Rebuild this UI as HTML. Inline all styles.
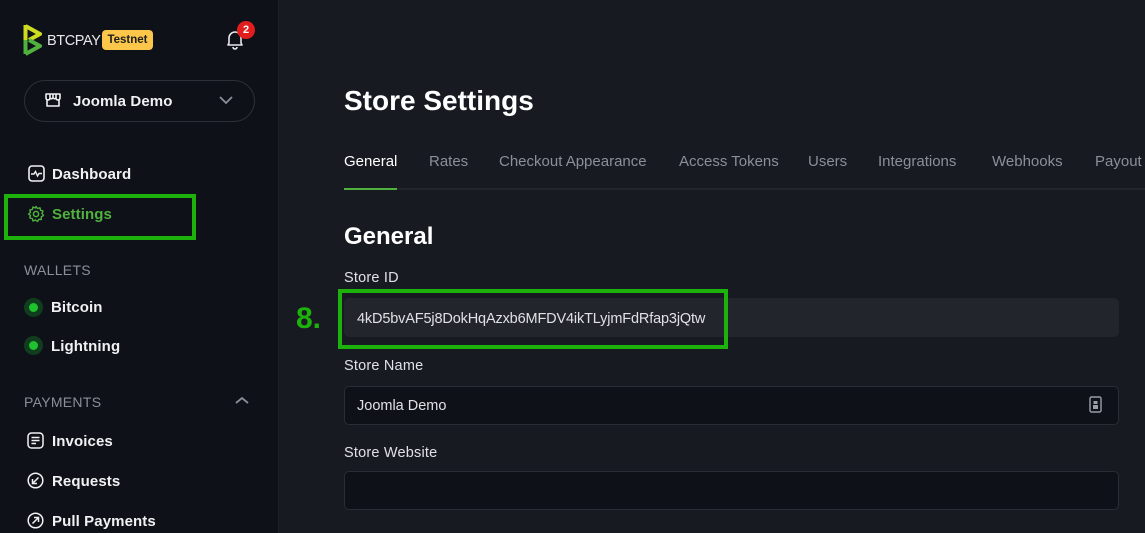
<!DOCTYPE html>
<html><head><meta charset="utf-8"><style>
*{margin:0;padding:0;box-sizing:border-box}
html{overflow:hidden;background:#171a21}
body{width:1145px;height:533px;overflow:hidden;background:#171a21;font-family:"Liberation Sans",sans-serif;position:relative;color:#fff}
.a{position:absolute;white-space:nowrap}
#side{position:absolute;left:0;top:0;width:279px;height:533px;background:#0f1118;border-right:1px solid #1c1f26}
.nav{font-size:15px;color:#f0f1f3;font-weight:bold;letter-spacing:.1px}
.sec{font-size:14px;color:#8a8f99;letter-spacing:.3px}
.tab{font-size:15px;color:#8a8f99;top:153px}
.lbl{font-size:14.5px;color:#dfe1e5;letter-spacing:.2px}
.inp{position:absolute;left:344px;width:775px;height:39px;border-radius:5px}
</style></head><body>
<div id="side">
<svg class="a" style="left:23px;top:23px" width="20" height="33" viewBox="0 0 20 33"><path d="M2.5 2 V31" stroke="#cedc21" stroke-width="4"/><path d="M2.5 3 L17 11 L6 17" fill="none" stroke="#cedc21" stroke-width="4" stroke-linejoin="round"/><path d="M6 17 L17 23 L2.5 31" fill="none" stroke="#51b13e" stroke-width="4" stroke-linejoin="round"/><path d="M2.5 17 V31" stroke="#51b13e" stroke-width="4"/></svg>
<div class="a" style="left:47px;top:33px;font-size:14.5px;color:#e6e8ea;letter-spacing:-.4px">BTCPAY</div>
<div class="a" style="left:102px;top:30px;width:51px;height:20px;background:#fbc64a;border-radius:4px;color:#1e1e1e;font-size:11.5px;font-weight:bold;text-align:center;line-height:20px">Testnet</div>
<svg class="a" style="left:224px;top:29px" width="22" height="22" viewBox="0 0 22 22"><path d="M4 16 L5 14 V9 A6 6 0 0 1 17 9 V14 L18 16 Z M9 18 A2 2 0 0 0 13 18" fill="none" stroke="#e6e8ea" stroke-width="1.6" stroke-linejoin="round"/></svg>
<div class="a" style="left:237px;top:21px;width:18px;height:18px;border-radius:50%;background:#e11d1d;color:#fff;font-size:11px;font-weight:bold;text-align:center;line-height:18px">2</div>
<div class="a" style="left:24px;top:80px;width:231px;height:42px;border:1px solid #2d3038;border-radius:21px"></div>
<svg class="a" style="left:44px;top:91px" width="18" height="18" viewBox="0 0 18 18"><path d="M2 3 H16 V7 A2 2 0 0 1 12 7 A2 2 0 0 1 9 7 A2 2 0 0 1 6 7 A2 2 0 0 1 2 7 Z M3 8 V15 H15 V8 M6 3 V7 M9 3 V7 M12 3 V7" fill="none" stroke="#f0f1f3" stroke-width="1.6" stroke-linejoin="round"/></svg>
<div class="a nav" style="left:73px;top:93px">Joomla Demo</div>
<svg class="a" style="left:218px;top:95px" width="16" height="10" viewBox="0 0 16 10"><path d="M2 2 L8 8 L14 2" fill="none" stroke="#8a8f99" stroke-width="1.8"/></svg>
<svg class="a" style="left:28px;top:165px" width="17" height="17" viewBox="0 0 17 17"><rect x="1" y="1" width="15" height="15" rx="3" fill="none" stroke="#f0f1f3" stroke-width="1.6"/><path d="M3 9 H6 L7.5 6.5 L9.5 11 L11 8.5 H14" fill="none" stroke="#f0f1f3" stroke-width="1.4"/></svg>
<div class="a nav" style="left:52px;top:166px">Dashboard</div>
<div class="a" style="left:4px;top:194px;width:192px;height:46px;border:4px solid #1db10c"></div>
<svg class="a" style="left:27px;top:205px" width="18" height="18" viewBox="0 0 18 18"><circle cx="9" cy="9" r="2.6" fill="none" stroke="#51b13e" stroke-width="1.5"/><path d="M9 1.5 L10.5 3.5 L13 2.8 L13.5 5.3 L16 6 L15 8.5 L16.5 10.5 L14.3 11.8 L14.3 14.5 L11.8 14.3 L10.5 16.5 L8.5 15 L6 16 L5.3 13.5 L2.8 13 L3.5 10.5 L1.5 9 L3.5 7.5 L2.8 5 L5.3 4.5 L6 2 L8.3 3 Z" fill="none" stroke="#51b13e" stroke-width="1.4" stroke-linejoin="round"/></svg>
<div class="a nav" style="left:52px;top:206px;color:#51b13e">Settings</div>
<div class="a sec" style="left:24px;top:262px">WALLETS</div>
<div class="a" style="left:24px;top:298px;width:19px;height:19px;border-radius:50%;background:#103d1d"></div>
<div class="a" style="left:29px;top:303px;width:9px;height:9px;border-radius:50%;background:#1ec12e"></div>
<div class="a nav" style="left:51px;top:299px">Bitcoin</div>
<div class="a" style="left:24px;top:336px;width:19px;height:19px;border-radius:50%;background:#103d1d"></div>
<div class="a" style="left:29px;top:341px;width:9px;height:9px;border-radius:50%;background:#1ec12e"></div>
<div class="a nav" style="left:51px;top:338px">Lightning</div>
<div class="a sec" style="left:24px;top:394px">PAYMENTS</div>
<svg class="a" style="left:235px;top:396px" width="14" height="9" viewBox="0 0 14 9"><path d="M1 7 L7 2 L13 7" fill="none" stroke="#8a8f99" stroke-width="1.8"/></svg>
<svg class="a" style="left:27px;top:432px" width="17" height="17" viewBox="0 0 17 17"><rect x="1" y="1" width="15" height="15" rx="3.5" fill="none" stroke="#f0f1f3" stroke-width="1.5"/><path d="M4.5 5.5 H12.5 M4.5 8.5 H12.5 M4.5 11.5 H9" stroke="#f0f1f3" stroke-width="1.5"/></svg>
<div class="a nav" style="left:52px;top:433px">Invoices</div>
<svg class="a" style="left:27px;top:472px" width="17" height="17" viewBox="0 0 17 17"><circle cx="8.5" cy="8.5" r="7.3" fill="none" stroke="#f0f1f3" stroke-width="1.5"/><path d="M11.5 5.5 L5.5 11.5 M5.5 7 V11.5 H10" fill="none" stroke="#f0f1f3" stroke-width="1.5"/></svg>
<div class="a nav" style="left:52px;top:473px">Requests</div>
<svg class="a" style="left:27px;top:512px" width="17" height="17" viewBox="0 0 17 17"><circle cx="8.5" cy="8.5" r="7.3" fill="none" stroke="#f0f1f3" stroke-width="1.5"/><path d="M5.5 11.5 L11.5 5.5 M7 5.5 H11.5 V10" fill="none" stroke="#f0f1f3" stroke-width="1.5"/></svg>
<div class="a nav" style="left:52px;top:513px">Pull Payments</div>
</div>

<div class="a" style="left:344px;top:85px;font-size:28px;font-weight:bold;color:#fff">Store Settings</div>
<div class="a tab" style="left:344px;color:#fff">General</div>
<div class="a tab" style="left:429px">Rates</div>
<div class="a tab" style="left:499px">Checkout Appearance</div>
<div class="a tab" style="left:679px">Access Tokens</div>
<div class="a tab" style="left:808px">Users</div>
<div class="a tab" style="left:878px">Integrations</div>
<div class="a tab" style="left:992px">Webhooks</div>
<div class="a tab" style="left:1095px">Payout</div>
<div class="a" style="left:344px;top:188px;width:801px;height:2px;background:#22252c"></div>
<div class="a" style="left:344px;top:188px;width:53px;height:2px;background:#51b13e"></div>
<div class="a" style="left:344px;top:223px;font-size:24px;font-weight:bold">General</div>
<div class="a lbl" style="left:344px;top:270px">Store ID</div>
<div class="inp" style="top:298px;background:#22252c"></div>
<div class="a" style="left:357px;top:311px;font-size:14.5px;color:#dfe1e5;letter-spacing:-.15px">4kD5bvAF5j8DokHqAzxb6MFDV4ikTLyjmFdRfap3jQtw</div>
<div class="a" style="left:338px;top:289px;width:390px;height:60px;border:4px solid #1db10c"></div>
<div class="a" style="left:296px;top:302px;font-size:30px;font-weight:bold;color:#1db10c">8.</div>
<div class="a lbl" style="left:344px;top:358px">Store Name</div>
<div class="inp" style="top:386px;background:#0f1118;border:1px solid #2a2d35"></div>
<div class="a" style="left:357px;top:398px;font-size:14.5px;color:#dfe1e5">Joomla Demo</div>
<svg class="a" style="left:1089px;top:396px" width="13" height="18" viewBox="0 0 13 18"><rect x="1" y="1" width="11" height="15" rx="1.5" fill="none" stroke="#9a9ea6" stroke-width="1.4"/><rect x="4.5" y="5" width="4" height="3" fill="#9a9ea6"/><rect x="4" y="9" width="5" height="4" fill="#9a9ea6"/></svg>
<div class="a lbl" style="left:344px;top:445px">Store Website</div>
<div class="inp" style="top:471px;background:#0f1118;border:1px solid #2a2d35"></div>
</body></html>
